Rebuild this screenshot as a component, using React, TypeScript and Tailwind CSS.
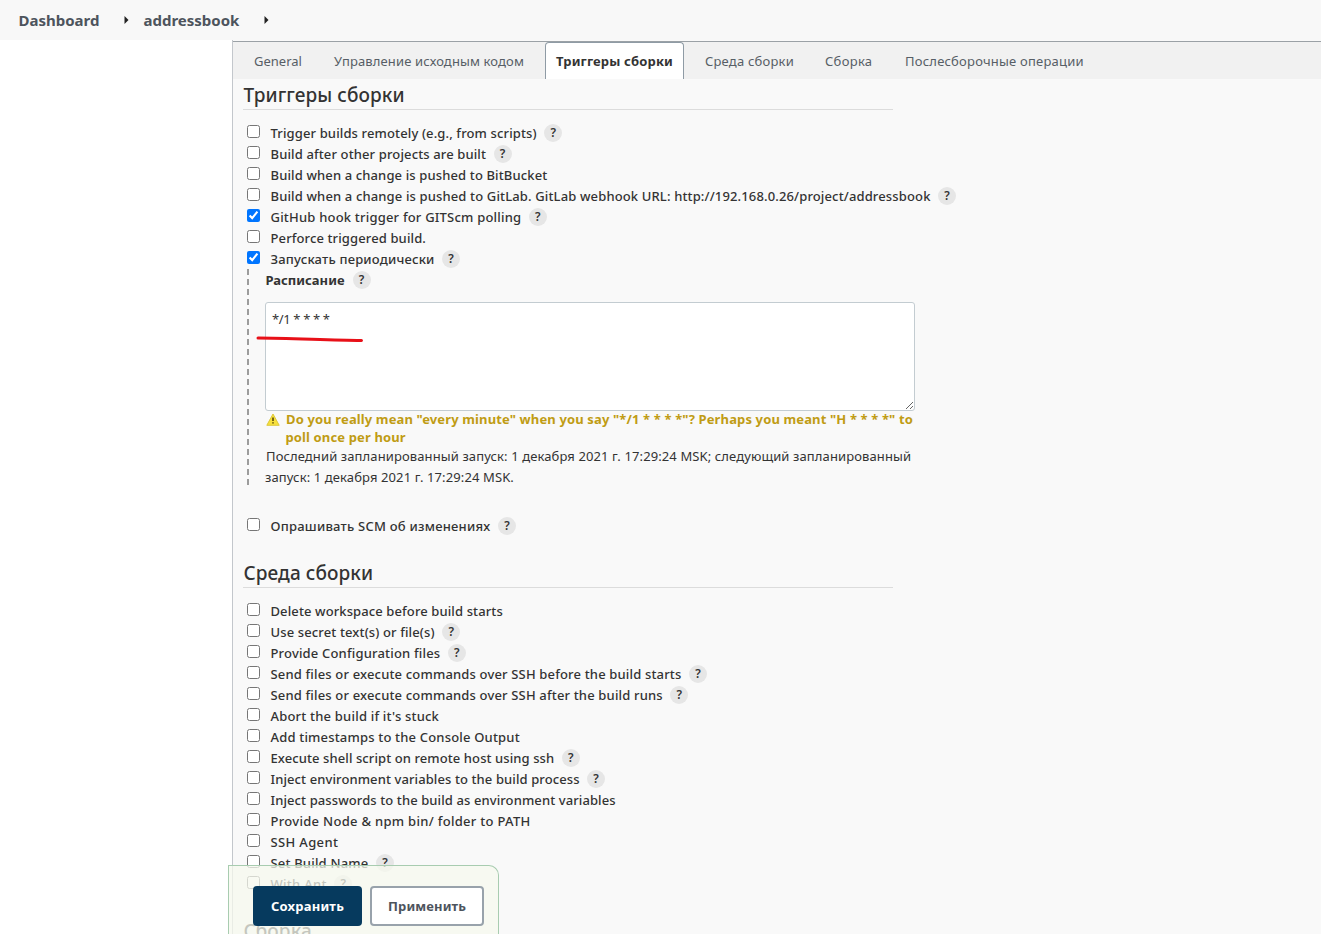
type Option = { label: string; help?: boolean; checked?: boolean; tracking?: string };

const triggers: Option[] = [
  { label: "Trigger builds remotely (e.g., from scripts)", help: true },
  { label: "Build after other projects are built", help: true },
  { label: "Build when a change is pushed to BitBucket" },
  {
    label:
      "Build when a change is pushed to GitLab. GitLab webhook URL: http://192.168.0.26/project/addressbook",
    help: true,
    tracking: "tracking-[0.14px]",
  },
  { label: "GitHub hook trigger for GITScm polling", help: true, checked: true, tracking: "tracking-[0.2px]" },
  { label: "Perforce triggered build.", tracking: "tracking-[0.12px]" },
  { label: "Запускать периодически", help: true, checked: true, tracking: "tracking-[0.19px]" },
];

const environment: Option[] = [
  { label: "Delete workspace before build starts", tracking: "tracking-[0.11px]" },
  { label: "Use secret text(s) or file(s)", help: true },
  { label: "Provide Configuration files", help: true, tracking: "tracking-[0.18px]" },
  { label: "Send files or execute commands over SSH before the build starts", help: true, tracking: "tracking-[0.165px]" },
  { label: "Send files or execute commands over SSH after the build runs", help: true, tracking: "tracking-[0.165px]" },
  { label: "Abort the build if it's stuck", tracking: "tracking-[0.2px]" },
  { label: "Add timestamps to the Console Output", tracking: "tracking-[0.18px]" },
  { label: "Execute shell script on remote host using ssh", help: true, tracking: "tracking-[0.09px]" },
  { label: "Inject environment variables to the build process", help: true, tracking: "tracking-[0.1px]" },
  { label: "Inject passwords to the build as environment variables", tracking: "tracking-[0.1px]" },
  { label: "Provide Node & npm bin/ folder to PATH", tracking: "tracking-[0.3px]" },
  { label: "SSH Agent", tracking: "tracking-[0.35px]" },
  { label: "Set Build Name", help: true, tracking: "tracking-[0.18px]" },
  { label: "With Ant", help: true, tracking: "tracking-[0.3px]" },
];

const tabs = [
  { label: "General", style: "ml-[21px] w-[48px]" },
  { label: "Управление исходным кодом", style: "ml-[32px] w-[190px] tracking-[0.12px]" },
  { label: "Триггеры сборки", active: true, style: "ml-[21px] w-[139px]" },
  { label: "Среда сборки", style: "ml-[21px] w-[89px] tracking-[0.2px]" },
  { label: "Сборка", style: "ml-[31px] w-[48px] tracking-[0.3px]" },
  { label: "Послесборочные операции", style: "ml-[32px] w-[180px] tracking-[0.21px]" },
];

function Help() {
  return (
    <span className="mb-[2px] flex size-[18px] shrink-0 items-center justify-center rounded-full bg-[#e6e6e6] text-[12px] font-semibold leading-none text-[#333]">
      ?
    </span>
  );
}

function OptionRow({ label, help, checked, tracking = "tracking-[0.13px]" }: Option) {
  return (
    <label className="flex h-[21px] items-center pl-[14px]">
      <input type="checkbox" defaultChecked={checked} className="mb-[5px] mr-[10.5px] size-[13px] shrink-0" />
      <span className={`mr-[7.5px] whitespace-nowrap text-[13px] font-medium leading-[21px] ${tracking}`}>{label}</span>
      {help && <Help />}
    </label>
  );
}

function SectionTitle({ children }: { children: string }) {
  return (
    <h2 className="ml-[10px] h-[31px] w-[650px] border-b border-[#dcdcdc] pl-[0.5px] text-[19px] font-medium leading-[32px] tracking-[0.08px]">
      {children}
    </h2>
  );
}

function Arrow() {
  return (
    <svg width="5" height="8" viewBox="0 0 5 8" className="shrink-0">
      <path d="M0.5 0L4.5 4L0.5 8Z" fill="#222" />
    </svg>
  );
}

export default function App() {
  return (
    <div className="relative flex h-[934px] w-[1321px] flex-col overflow-hidden bg-white font-['Noto_Sans',sans-serif] text-[#333]">
      <header className="flex h-10 shrink-0 items-center bg-[#f8f8f8] pl-[18.5px] text-[15px] font-bold text-[#4d545d]">
        <span className="w-[81px]">Dashboard</span>
        <span className="ml-[24px] flex w-5">
          <Arrow />
        </span>
        <span className="w-[96px]">addressbook</span>
        <span className="ml-[24px] flex">
          <Arrow />
        </span>
      </header>

      <div className="flex min-h-0 flex-1">
        <aside className="w-[232px] shrink-0" />
        <main className="flex-1 border-l border-[#c3c7cc] bg-[#f9f9f9] pt-px">
          <nav className="flex h-[38px] border-t border-[#9ba1a6] bg-[#f1f1f1] text-[13px] leading-[38px] text-[#575e66]">
            {tabs.map((tab) => (
              <div
                key={tab.label}
                className={`whitespace-nowrap ${tab.style} ${
                  tab.active
                    ? "rounded-t-[4px] border-x border-t border-[#8f9ba5] bg-white text-center font-bold leading-[36px] tracking-[0.15px] text-[#333]"
                    : ""
                }`}
              >
                {tab.label}
              </div>
            ))}
          </nav>

          <section>
            <SectionTitle>Триггеры сборки</SectionTitle>
            <div className="mt-[13px]">
              {triggers.map((option) => (
                <OptionRow key={option.label} {...option} />
              ))}
            </div>

            <div className="flex h-[218px]">
              <svg width="2" height="219" className="-mt-px ml-[14px] mr-4 shrink-0">
                <line x1="1" y1="0" x2="1" y2="219" stroke="#9c9c9c" strokeWidth="2" strokeDasharray="6 4" />
              </svg>
              <div className="relative w-[650px]">
                <div className="flex h-[22px] items-center gap-2 pl-[0.5px] text-[13px] font-bold">
                  Расписание
                  <Help />
                </div>
                <textarea
                  defaultValue="*/1 * * * *"
                  className="mt-[10px] block h-[109px] w-[650px] resize rounded-[3px] border border-[#c3ccd1] bg-white px-[6px] py-[6px] text-[13px] leading-[20px] tracking-[-0.37px] outline-none"
                />
                <svg width="108" height="8" className="absolute left-[-9px] top-[65px]">
                  <path d="M2 3C30 3 70 5 105.500 5.500" fill="none" stroke="#e81018" strokeWidth="3" strokeLinecap="round" />
                </svg>
                <div className="-mt-px flex whitespace-nowrap text-[13px] font-bold leading-[18px] tracking-[0.13px] text-[#c09c14]">
                  <svg width="14" height="13" viewBox="0 0 14 13" className="ml-px mr-[5px] mt-[3px] shrink-0">
                    <path d="M7 1L13.200 12.300H0.800Z" fill="#f7e03c" stroke="#dcc83c" strokeWidth="1" strokeLinejoin="round" />
                    <path d="M7 4.500V8M7 9.300V10.600" stroke="#4b3c08" strokeWidth="1.500" />
                  </svg>
                  <div>
                    <div className="pl-px">
                      Do you really mean "every minute" when you say "*/1 * * * *"? Perhaps you meant "H * * * *" to
                    </div>
                    <div className="pl-[0.5px]">poll once per hour</div>
                  </div>
                </div>
                <div className="whitespace-nowrap text-[13px] leading-[21px] tracking-[0.11px]">
                  <div className="pl-px">
                    Последний запланированный запуск: 1 декабря 2021 г. 17:29:24 MSK; следующий запланированный
                  </div>
                  <div>запуск: 1 декабря 2021 г. 17:29:24 MSK.</div>
                </div>
              </div>
            </div>

            <div className="mt-[28px]">
              <OptionRow label="Опрашивать SCM об изменениях" help tracking="tracking-[0.23px]" />
            </div>
          </section>

          <section className="mt-5">
            <SectionTitle>Среда сборки</SectionTitle>
            <div className="mt-[13px]">
              {environment.map((option) => (
                <OptionRow key={option.label} {...option} />
              ))}
            </div>
          </section>

          <section className="mt-5">
            <SectionTitle>Сборка</SectionTitle>
          </section>
        </main>
      </div>

      <div className="absolute bottom-0 left-[228px] flex h-[69px] w-[271px] gap-2 rounded-tr-[10px] border-l border-r border-t border-[#a8ccb0] bg-[#f5f8ee]/75 pl-6 pt-5 text-[13px] font-bold">
        <button className="h-10 w-[109px] rounded-[4px] bg-[#063a5e] pt-px tracking-[0.2px] text-white">Сохранить</button>
        <button className="h-10 w-[114px] rounded-[4px] border-2 border-[#98a2ab] bg-white pt-px tracking-[0.12px] text-[#4d545d]">
          Применить
        </button>
      </div>
    </div>
  );
}
